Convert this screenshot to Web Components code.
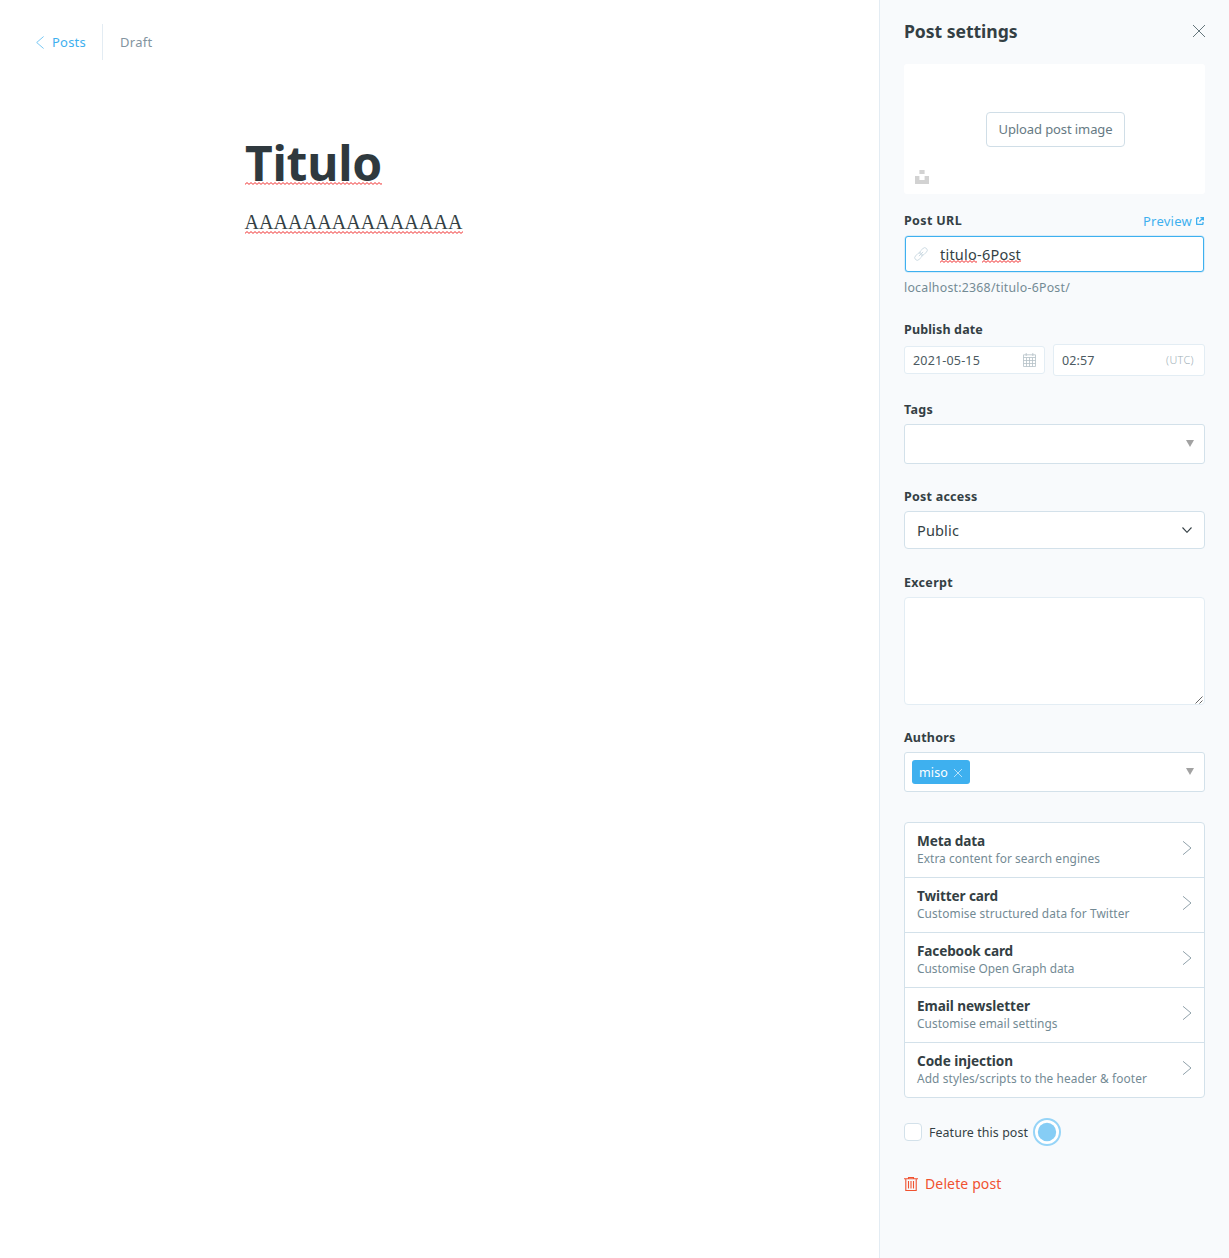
<!DOCTYPE html>
<html lang="en">
<head>
<meta charset="utf-8">
<title>Post editor</title>
<style>
html,body{margin:0;height:100%;background:#fff}
body{font-family:"Noto Sans","Open Sans",sans-serif;color:#343f44;font-size:13px}
</style>
</head>
<body>
<post-editor></post-editor>
<script>
const define = (name, html, setup) => {
  const t = document.createElement('template');
  t.innerHTML = html;
  customElements.define(name, class extends HTMLElement {
    connectedCallback() {
      if (this.shadowRoot) return;
      this.attachShadow({mode: 'open'}).append(t.content.cloneNode(true));
      if (setup) setup(this, this.shadowRoot);
    }
  });
};

/* One line of text, tracked so that it fills the width given in "w". */
define('fit-text', `<style>:host{display:inline-block;white-space:nowrap;line-height:20px;flex:none}span{display:inline-block}</style><span><slot></slot></span>`, (el, root) => {
  const span = root.querySelector('span');
  const w = parseFloat(el.getAttribute('w'));
  el.style.width = w + 'px';
  const text = root.querySelector('slot').assignedNodes({flatten: true}).map(n => n.textContent).join('');
  if (text.length) span.style.letterSpacing = ((w - span.getBoundingClientRect().width) / text.length) + 'px';
});

/* Wavy underline of the spelling checker. */
define('spell-mark', `<style>:host{display:inline-block;position:relative}svg{position:absolute;left:0;top:var(--mark-top,20px);width:100%;height:3px;overflow:hidden}</style><slot></slot><svg><path fill="none" stroke="#f03434" stroke-width="1"/></svg>`, (el, root) => {
  let d = 'M0 2.4';
  for (let x = 2; x < 260; x += 2) d += `L${x} ${x % 4 ? .6 : 2.4}`;
  root.querySelector('path').setAttribute('d', d);
});

define('editor-header', `<style>
:host{display:flex;align-items:center;height:36px;padding:24px 0 0 36px}
svg{width:8px;height:13px;margin-right:8px}
.back{display:flex;align-items:center;height:36px;padding-right:16px;border-right:1px solid #e3ecf3;color:#3eb0ef;margin-right:17px}
.status{color:#8394a0}
</style>
<div class="back"><svg viewBox="0 0 8 13" fill="none" stroke="#3eb0ef" stroke-width=".7"><path d="M7.6.5 .7 6.5l6.9 6"/></svg><fit-text w="34">Posts</fit-text></div>
<fit-text class="status" w="32.5">Draft</fit-text>`);

define('editor-canvas', `<style>
:host{display:block;padding:71px 0 0 245px}
h1{margin:0;font-size:48px;line-height:64px;height:64px;color:#2f393e}
h1 spell-mark{--mark-top:51px}
h1 fit-text{line-height:64px}
p{margin:15px 0 0 -.5px;font:20px/24px "Liberation Serif",serif;color:#343f44}
p fit-text{line-height:24px}
p spell-mark{--mark-top:21px}
</style>
<h1><spell-mark><fit-text w="137">Titulo</fit-text></spell-mark></h1>
<p><spell-mark><fit-text w="218">AAAAAAAAAAAAAAA</fit-text></spell-mark></p>`);

define('panel-header', `<style>
:host{display:flex;align-items:center;justify-content:space-between;box-sizing:border-box;height:64px;padding-bottom:2px}
h2{margin:0;font-size:17.6px;line-height:20px;height:20px;color:#343f44}
svg{width:12px;height:12px}
</style><h2><fit-text w="113.5"><slot></slot></fit-text></h2><svg viewBox="0 0 12 12" fill="none" stroke="#54666d" stroke-width=".9"><path d="M0 0l12 12M12 0L0 12"/></svg>`);

define('image-uploader', `<style>
:host{display:flex;align-items:center;justify-content:center;height:130px;background:#fff;border-radius:3px;position:relative}
button{font:inherit;background:#fff;border:1px solid #d0dee7;border-radius:4px;width:139px;height:35px;padding:0;color:#667a83;margin-left:2px}
svg{position:absolute;left:11px;top:106px;width:14px;height:14px}
</style><button><fit-text w="114"><slot></slot></fit-text></button><svg viewBox="0 0 14 14" fill="#d2d2d2"><path d="M4.4 0h5.2v4H4.4zM0 6h4.4v4h5.2V6H14v8H0z"/></svg>`);

define('form-field', `<style>
:host{display:block;margin-top:var(--gap,22px)}
.label{display:flex;justify-content:space-between;height:20px;margin-bottom:5px}
b{display:block;height:20px;font-size:12.5px;margin-top:var(--drop,1px)}
</style><div class="label"><b></b><slot name="action"></slot></div><slot></slot>`, (el, root) => {
  const f = document.createElement('fit-text');
  f.setAttribute('w', el.getAttribute('w'));
  f.textContent = el.getAttribute('label');
  root.querySelector('b').append(f);
});

define('preview-link', `<style>:host{display:flex;align-items:center;height:20px;color:#3eb0ef;margin-right:1px}svg{width:8px;height:8px;margin-left:4px}</style>
<fit-text w="49">Preview</fit-text><svg viewBox="0 0 8 8" fill="none" stroke="#3eb0ef" stroke-width="1.3"><path d="M3 1H1.2Q.6 1 .6 1.6v5.2q0 .6.6.6h5.2q.6 0 .6-.6V5M4.4.6h3v3M7.2.8 3.4 4.6"/></svg>`);

define('url-input', `<style>
:host{display:block}
.box{display:flex;align-items:center;box-sizing:border-box;height:36px;margin:0 1px;border:1px solid #3eb0ef;border-radius:3px;background:#fff;font-size:14.5px;padding-left:9px;box-shadow:0 0 0 .5px #3eb0ef55}
.box svg{width:14px;height:14px;margin:0 12px 0 -1px}
spell-mark{--mark-top:16px}
.help{font-size:12.3px;color:#738a94;height:20px;margin-top:6px}
</style><div class="box"><svg viewBox="0 0 14 14" fill="none" stroke="#cbd9e2" stroke-width=".9"><g transform="rotate(-45 7 7)"><rect x="-.8" y="4.5" width="8.6" height="5" rx="2.5"/><rect x="6.2" y="4.5" width="8.6" height="5" rx="2.5"/><path d="M4 7h6"/></g></svg><spell-mark><fit-text w="37">titulo</fit-text></spell-mark><fit-text w="5">-</fit-text><spell-mark><fit-text w="39">6Post</fit-text></spell-mark></div>
<div class="help"><fit-text w="166">localhost:2368/titulo-6Post/</fit-text></div>`);

define('date-time', `<style>
:host{display:flex;align-items:center;gap:8px;height:32px;color:#4c5a61;font-size:12.5px}
div{display:flex;align-items:center;justify-content:space-between;box-sizing:border-box;background:#fff;border:1px solid #e3edf4;border-radius:3px;padding:0 8px}
.date{width:141px;height:28px}.time{width:152px;height:32px;padding-right:10px}
.value{margin-top:2px}
svg{width:13px;height:14px}
.zone{font-size:10.8px;color:#a0b0b8;font-weight:300}
</style><div class="date"><fit-text class="value" w="67">2021-05-15</fit-text><svg viewBox="0 0 13 14" fill="none" stroke="#b4c0c6" stroke-width=".8"><path d="M.5 1.8h12v11.7H.5zM.5 4.5h12M.5 7.5h12M.5 10.5h12M3.5 4.5v9M6.5 4.5v9M9.5 4.5v9M3.2 0v3M9.8 0v3"/></svg></div>
<div class="time"><fit-text class="value" w="32.5">02:57</fit-text><fit-text class="zone" w="28">(UTC)</fit-text></div>`);

define('token-select', `<style>
:host{display:flex;align-items:center;justify-content:space-between;box-sizing:border-box;height:40px;background:#fff;border:1px solid #d3e1ea;border-radius:3px;padding:0 10px 0 7px}
svg{width:8px;height:7px;margin-top:-2px}
</style><div><slot></slot></div><svg viewBox="0 0 8 7" fill="#a2a2a2"><path d="M0 0h8L4 7z"/></svg>`);

define('author-token', `<style>
:host{display:flex;align-items:center;box-sizing:border-box;width:58px;height:24px;background:#3eb0ef;border-radius:3px;color:#fff;padding-left:7px;font-size:12.5px}
fit-text{margin-top:2px}
svg{width:8px;height:8px;margin:2px 0 0 6px}
</style><fit-text w="29"><slot></slot></fit-text><svg viewBox="0 0 8 8" stroke="#c4e7fb" stroke-width=".9"><path d="M0 0l8 8M8 0L0 8"/></svg>`);

define('access-select', `<style>
:host{display:flex;align-items:center;justify-content:space-between;box-sizing:border-box;height:38px;background:#fff;border:1px solid #d3e1ea;border-radius:4px;padding:0 12px;font-size:14.5px}
svg{width:10px;height:6px;margin-top:-1px}
</style><fit-text w="42">Public</fit-text><svg viewBox="0 0 10 6" fill="none" stroke="#343f44" stroke-width="1.1"><path d="M.5.5 5 5.3 9.5.5"/></svg>`);

define('excerpt-box', `<style>
:host{display:flex;align-items:flex-end;justify-content:flex-end;box-sizing:border-box;height:108px;background:#fff;border:1px solid #e3edf4;border-radius:4px;padding:0 1px 0 0}
svg{width:8px;height:8px}
</style><svg viewBox="0 0 8 8" stroke="#555" stroke-width=".9"><path d="M.5 7.5l7-7M4.5 7.5l3-3"/></svg>`);

define('settings-list', `<style>:host{display:block;box-sizing:border-box;border:1px solid #d3e1ea;border-radius:4px;background:#fff;margin-top:30px;overflow:hidden}</style><slot></slot>`);

define('settings-item', `<style>
:host{display:flex;align-items:center;justify-content:space-between;height:54px;padding:0 12px;border-bottom:1px solid #d3e1ea}
:host(:last-child){border-bottom:0}
.copy{display:flex;flex-direction:column;height:54px;box-sizing:border-box;padding-top:8px}
b{font-size:13.6px;height:17px;line-height:20px;color:#343f44}
small{font-size:11.9px;color:#738a94;height:20px;line-height:20px}
svg{width:10px;height:14px;margin-top:-4px}
</style><div class="copy"><b></b><small></small></div><svg viewBox="0 0 10 14" fill="none" stroke="#8396a0" stroke-width=".9"><path d="M1 .3 9 7 1 13.7"/></svg>`, (el, root) => {
  const put = (sel, attr, w) => {
    const f = document.createElement('fit-text');
    f.setAttribute('w', el.getAttribute(w));
    f.textContent = el.getAttribute(attr);
    root.querySelector(sel).append(f);
  };
  put('b', 'title-text', 'tw');
  put('small', 'note', 'nw');
});

define('feature-toggle', `<style>
:host{display:flex;align-items:center;height:28px;margin-top:20px;font-size:12.4px}
i{box-sizing:border-box;width:18px;height:18px;border:1px solid #d3e1ea;border-radius:4px;background:#fff;margin-right:7px}
fit-text{margin-top:2px}
svg{width:28px;height:28px;margin-left:5px}
</style><i></i><fit-text w="99">Feature this post</fit-text><svg viewBox="0 0 28 28"><circle cx="14" cy="14" r="13" fill="#fff" stroke="#96d4f7" stroke-width="2"/><circle cx="14" cy="14" r="9.2" fill="#86cdf5"/></svg>`);

define('delete-button', `<style>
:host{display:flex;align-items:center;height:20px;margin-top:28px;color:#f05230;font-size:14px}
svg{width:14px;height:14px;margin-right:7px}
</style><svg viewBox="0 0 14 14" fill="none" stroke="#f05230" stroke-width="1.1"><path d="M0 1.7h14M4.5 1.7V.5h5v1.2M1.8 2v11.5h10.4V2M4.5 4v7.5M7 4v7.5M9.5 4v7.5"/></svg><fit-text w="76.5">Delete post</fit-text>`);

define('settings-panel', `<style>
:host{display:block;box-sizing:border-box;width:350px;border-left:1px solid #e3ecf3;background:#f8fafc;padding:0 24px}
</style>
<panel-header>Post settings</panel-header>
<image-uploader>Upload post image</image-uploader>
<form-field label="Post URL" w="58" style="--gap:17px;--drop:0px"><preview-link slot="action"></preview-link><url-input></url-input></form-field>
<form-field label="Publish date" w="79" style="--gap:21px"><date-time></date-time></form-field>
<form-field label="Tags" w="29" style="--gap:23px"><token-select></token-select></form-field>
<form-field label="Post access" w="73.5"><access-select></access-select></form-field>
<form-field label="Excerpt" w="49" style="--gap:23px"><excerpt-box></excerpt-box></form-field>
<form-field label="Authors" w="51.5"><token-select><author-token>miso</author-token></token-select></form-field>
<settings-list>
<settings-item title-text="Meta data" tw="68" note="Extra content for search engines" nw="183"></settings-item>
<settings-item title-text="Twitter card" tw="81" note="Customise structured data for Twitter" nw="212.5"></settings-item>
<settings-item title-text="Facebook card" tw="96" note="Customise Open Graph data" nw="157.5"></settings-item>
<settings-item title-text="Email newsletter" tw="113" note="Customise email settings" nw="140.5"></settings-item>
<settings-item title-text="Code injection" tw="96" note="Add styles/scripts to the header &amp; footer" nw="230"></settings-item>
</settings-list>
<feature-toggle></feature-toggle>
<delete-button></delete-button>`);

define('post-editor', `<style>
:host{display:flex;min-height:100vh}
main{flex:1;min-width:0;background:#fff}
</style><main><editor-header></editor-header><editor-canvas></editor-canvas></main><settings-panel></settings-panel>`);
</script>
</body>
</html>
